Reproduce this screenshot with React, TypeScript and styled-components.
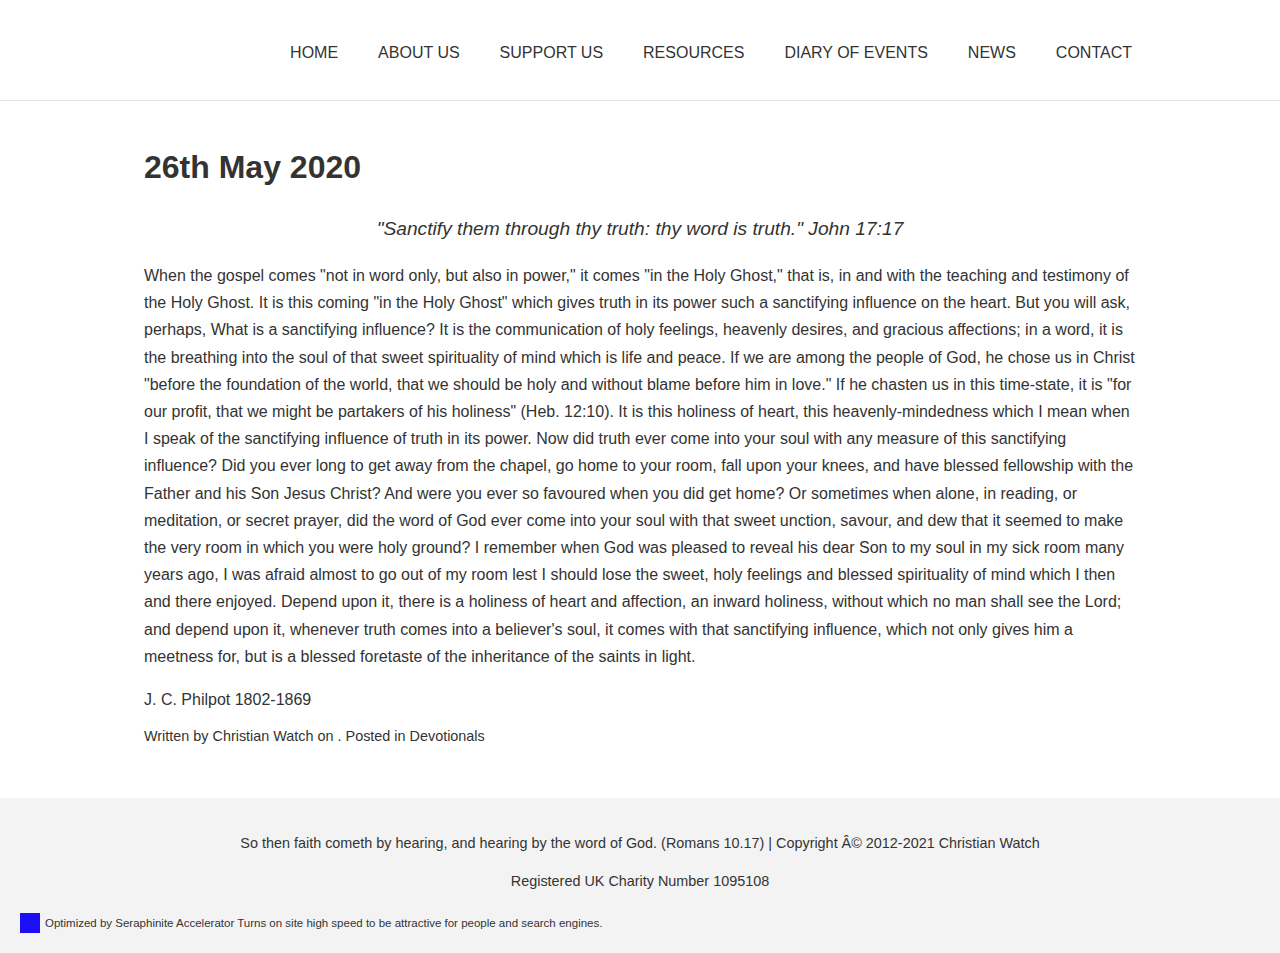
import React from "react";
import styled, { createGlobalStyle } from "styled-components";

const Global = createGlobalStyle`
  html, body { margin: 0; padding: 0; background: #fff; }
  body { font-family: "Liberation Sans", Arial, sans-serif; color: #333; }
  * { box-sizing: border-box; }
`;

const Header = styled.header`
  height: 101px;
  border-bottom: 1px solid #e3e3e3;
  display: flex;
  align-items: center;
  justify-content: flex-end;
  padding-right: 148px;
`;

const Nav = styled.nav`
  display: flex;
  gap: 40px;
  margin-top: 6px;
`;

const NavLink = styled.a`
  font-size: 16px;
  color: #333;
  text-decoration: none;
  text-transform: uppercase;
`;

const Main = styled.main`
  width: 992px;
  margin: 0 auto;
  padding: 47px 0 53px;
`;

const Title = styled.h1`
  font-size: 32px;
  font-weight: bold;
  margin: 0 0 30px;
  line-height: 38px;
`;

const Quote = styled.p`
  font-size: 19.2px;
  font-style: italic;
  text-align: center;
  margin: 0 0 20px;
  line-height: 26px;
`;

const Body = styled.p`
  font-size: 16px;
  line-height: 27.2px;
  margin: 0 0 19px;
`;

const Signature = styled.p`
  font-size: 16px;
  line-height: 22px;
  margin: 0 0 16px;
`;

const Meta = styled.p`
  font-size: 14.4px;
  line-height: 18px;
  margin: 0;
`;

const Footer = styled.footer`
  background: #f3f3f3;
  padding: 36px 20px 22px;
`;

const FooterLine = styled.p`
  font-size: 14.4px;
  line-height: 18px;
  text-align: center;
  margin: 0 0 20px;
`;

const Badge = styled.div`
  display: flex;
  align-items: center;
  gap: 5px;
  font-size: 11.5px;
  color: #333;
  margin-top: 23px;
`;

const Square = styled.span`
  width: 20px;
  height: 20px;
  background: #1c0ff5;
  display: inline-block;
`;

const navItems = ["Home", "About Us", "Support Us", "Resources", "Diary of Events", "News", "Contact"];

export default function App() {
  return (
    <>
      <Global />
      <Header>
        <Nav>
          {navItems.map((n) => (
            <NavLink key={n} href="#">{n}</NavLink>
          ))}
        </Nav>
      </Header>
      <Main>
        <Title>26th May 2020</Title>
        <Quote>"Sanctify them through thy truth: thy word is truth." John 17:17</Quote>
        <Body>
          When the gospel comes "not in word only, but also in power," it comes "in the Holy Ghost," that is, in and with the teaching and testimony of the Holy Ghost. It is this coming "in the Holy Ghost" which gives truth in its power such a sanctifying influence on the heart. But you will ask, perhaps, What is a sanctifying influence? It is the communication of holy feelings, heavenly desires, and gracious affections; in a word, it is the breathing into the soul of that sweet spirituality of mind which is life and peace. If we are among the people of God, he chose us in Christ "before the foundation of the world, that we should be holy and without blame before him in love." If he chasten us in this time-state, it is "for our profit, that we might be partakers of his holiness" (Heb. 12:10). It is this holiness of heart, this heavenly-mindedness which I mean when I speak of the sanctifying influence of truth in its power. Now did truth ever come into your soul with any measure of this sanctifying influence? Did you ever long to get away from the chapel, go home to your room, fall upon your knees, and have blessed fellowship with the Father and his Son Jesus Christ? And were you ever so favoured when you did get home? Or sometimes when alone, in reading, or meditation, or secret prayer, did the word of God ever come into your soul with that sweet unction, savour, and dew that it seemed to make the very room in which you were holy ground? I remember when God was pleased to reveal his dear Son to my soul in my sick room many years ago, I was afraid almost to go out of my room lest I should lose the sweet, holy feelings and blessed spirituality of mind which I then and there enjoyed. Depend upon it, there is a holiness of heart and affection, an inward holiness, without which no man shall see the Lord; and depend upon it, whenever truth comes into a believer's soul, it comes with that sanctifying influence, which not only gives him a meetness for, but is a blessed foretaste of the inheritance of the saints in light.
        </Body>
        <Signature>J. C. Philpot 1802-1869</Signature>
        <Meta>Written by Christian Watch on . Posted in Devotionals</Meta>
      </Main>
      <Footer>
        <FooterLine>So then faith cometh by hearing, and hearing by the word of God. (Romans 10.17) | Copyright Â© 2012-2021 Christian Watch</FooterLine>
        <FooterLine>Registered UK Charity Number 1095108</FooterLine>
        <Badge>
          <Square />
          <span>Optimized by Seraphinite Accelerator Turns on site high speed to be attractive for people and search engines.</span>
        </Badge>
      </Footer>
    </>
  );
}
